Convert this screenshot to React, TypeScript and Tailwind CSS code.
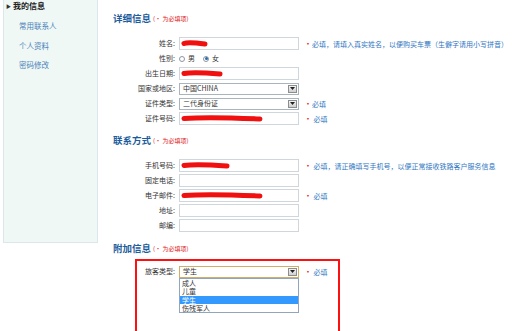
import React from "react";

const Scribble = ({ w }: { w: number }) => (
  <svg width={w + 6} height="9" viewBox={`0 0 ${w + 6} 9`} className="absolute left-[1px] top-[1px]">
    <path
      d={`M3 4.5 C ${w * 0.3} 3, ${w * 0.6} 3.5, ${w + 3} 5`}
      stroke="#f01010"
      strokeWidth="5"
      strokeLinecap="round"
      fill="none"
    />
  </svg>
);

const Input = ({ scribble }: { scribble?: number }) => (
  <div className="relative w-[120px] h-[13px] border border-[#cfd6dc] bg-white">
    {scribble ? <Scribble w={scribble} /> : null}
  </div>
);

const Select = ({ value, border = "border-[#aab4bd]" }: { value: string; border?: string }) => (
  <div className={`relative w-[120px] h-[12px] border ${border} bg-white flex items-center`}>
    <span className="pl-[3px] text-[7px] leading-none text-[#333]">{value}</span>
    <div className="absolute right-[1px] top-[1px] w-[9px] h-[8px] border border-[#8d8d8d] bg-gradient-to-b from-[#f4f4f4] to-[#cfcfcf] flex items-center justify-center">
      <svg width="5" height="3" viewBox="0 0 5 3">
        <path d="M0 0 L5 0 L2.5 3 Z" fill="#222" />
      </svg>
    </div>
  </div>
);

const Hint = ({ text, gap }: { text: string; gap?: boolean }) => (
  <span className="ml-[5px] text-[7px] leading-none whitespace-nowrap">
    <span className="text-[#ee1111] text-[8px]">•</span>
    {gap ? " " : ""}
    <span className="text-[#2f76bf]">{text}</span>
  </span>
);

const Row = ({ label, children }: { label: string; children: React.ReactNode }) => (
  <div className="flex items-center h-[15px]">
    <div className="w-[72px] text-right text-[7px] leading-none text-[#333] whitespace-nowrap">{label}</div>
    <div className="ml-[4px] flex items-center">{children}</div>
  </div>
);

const Heading = ({ title }: { title: string }) => (
  <div className="h-[12px] pl-[10px] flex items-end">
    <span className="text-[9.5px] leading-none font-bold text-[#1d5c9c]">{title}</span>
    <span className="ml-[2px] text-[6px] leading-none text-[#e02020] pb-[1px]">(• 为必填项)</span>
  </div>
);

const Radio = ({ checked }: { checked?: boolean }) => (
  <span className="w-[6px] h-[6px] rounded-full border border-[#8a97a3] bg-white flex items-center justify-center">
    {checked ? <span className="w-[3px] h-[3px] rounded-full bg-[#2a6aa8]" /> : null}
  </span>
);

export default function App() {
  return (
    <div className="w-[512px] h-[331px] overflow-hidden bg-white flex font-['Noto_Sans_CJK_SC','Noto_Sans',sans-serif]">
      <aside className="w-[103px] shrink-0 pl-[3px] pr-[5px]">
        <div className="h-[243px] bg-[#eff8f5] border border-[#dbe7ea] border-t-0 overflow-hidden">
          <div className="pl-[2px] pt-px flex items-center h-[10px]">
            <span className="text-[5px] leading-none text-[#333]">▶</span>
            <span className="ml-[2px] text-[8px] font-bold leading-none text-[#222]">我的信息</span>
          </div>
          <div className="mt-[12px] pl-[15px] flex flex-col gap-[11px] text-[7.5px] leading-[8.5px] text-[#4b82ba]">
            <span>常用联系人</span>
            <span>个人资料</span>
            <span>密码修改</span>
          </div>
        </div>
      </aside>
      <main className="flex-1 flex flex-col">
        <div className="mt-[4px] ml-[75px] w-[85px] h-px bg-[#e2e2e2]" />
        <div className="mt-[7px]">
          <Heading title="详细信息" />
        </div>
        <div className="mt-[7px] h-px bg-[#a9cbe9]" />
        <div className="mt-[6px] flex flex-col">
          <Row label="姓名:">
            <Input scribble={21} />
            <Hint text="必填，请填入真实姓名，以便购买车票（生僻字请用小写拼音）" />
          </Row>
          <Row label="性别:">
            <div className="flex items-center gap-[3px] text-[7px] leading-none text-[#333]">
              <Radio />
              <span>男</span>
              <span className="ml-[2px]" />
              <Radio checked />
              <span>女</span>
            </div>
          </Row>
          <Row label="出生日期:">
            <Input scribble={36} />
          </Row>
          <Row label="国家或地区:">
            <Select value="中国CHINA" />
          </Row>
          <Row label="证件类型:">
            <Select value="二代身份证" />
            <Hint text="必填" />
          </Row>
          <Row label="证件号码:">
            <Input scribble={76} />
            <Hint text="必填" gap />
          </Row>
        </div>
        <div className="mt-[7px]">
          <Heading title="联系方式" />
        </div>
        <div className="mt-[7px] h-px bg-[#a9cbe9]" />
        <div className="mt-[6px] flex flex-col">
          <Row label="手机号码:">
            <Input scribble={43} />
            <Hint text="必填，请正确填写手机号，以便正常接收铁路客户服务信息" gap />
          </Row>
          <Row label="固定电话:">
            <Input />
          </Row>
          <Row label="电子邮件:">
            <Input scribble={76} />
            <Hint text="必填" gap />
          </Row>
          <Row label="地址:">
            <Input />
          </Row>
          <Row label="邮编:">
            <Input />
          </Row>
        </div>
        <div className="mt-[8px]">
          <Heading title="附加信息" />
        </div>
        <div className="mt-[6px] h-px bg-[#a9cbe9]" />
        <div className="ml-[32px] w-[205px] h-[80px] shrink-0 border-2 border-[#ff1010] pt-[3px]">
          <div className="flex items-center h-[15px]">
            <div className="w-[38px] text-right text-[7px] leading-none text-[#333] whitespace-nowrap">旅客类型:</div>
            <div className="ml-[4px] relative">
              <Select value="学生" border="border-[#d2ad6a]" />
              <div className="absolute left-0 top-[12px] w-[120px] h-[35px] border border-[#8fa6bd] bg-white flex flex-col text-[7px] leading-[8.5px] text-[#333]">
                <span className="pl-[2px]">成人</span>
                <span className="pl-[2px]">儿童</span>
                <span className="pl-[2px] bg-[#3399ff] text-white">学生</span>
                <span className="pl-[2px]">伤残军人</span>
              </div>
            </div>
            <Hint text="必填" gap />
          </div>
        </div>
      </main>
    </div>
  );
}
